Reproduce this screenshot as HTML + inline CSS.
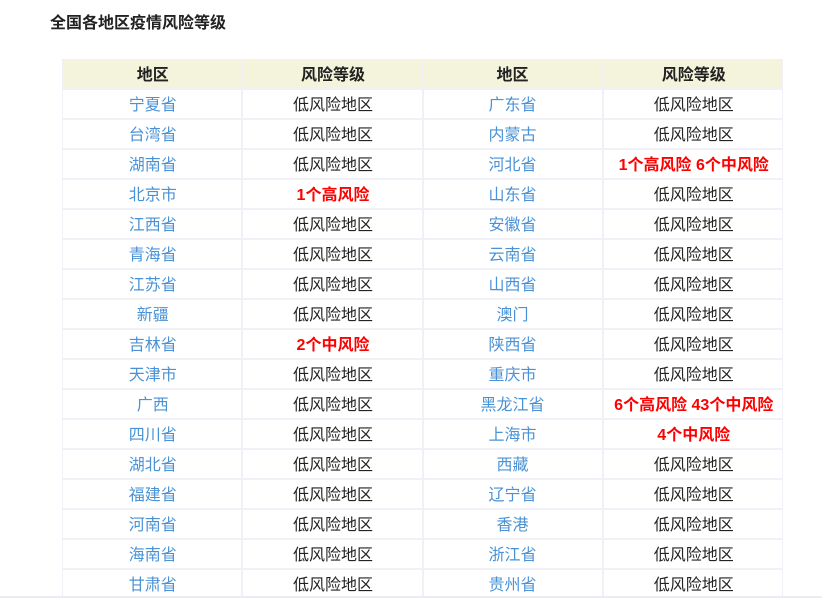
<!DOCTYPE html>
<html lang="zh">
<head>
<meta charset="utf-8">
<style>
html,body{margin:0;padding:0;background:#fff;width:822px;height:598px;overflow:hidden}
body{position:relative;font-family:"Liberation Sans","Noto Sans CJK SC",sans-serif;color:#222}
h1{position:absolute;left:50px;top:13px;margin:0;font-size:16px;line-height:22px;font-weight:bold;color:#222}
table{position:absolute;left:62px;top:59px;width:720px;border-collapse:collapse;table-layout:fixed}
th,td{border:2px solid #f0f0f6;box-sizing:content-box;padding:4px 0 0;text-align:center;font-size:16px;line-height:24px;height:24px}
tr>:first-child{border-left-width:1px;text-indent:2px}
tr>:nth-child(2){text-indent:2px}
tr>:last-child{border-right-width:1px;text-indent:2px}
th{background:#f4f4dc;font-weight:bold;color:#222;border-top-width:1px}
td{color:#222}
td.l{color:#4a92d6}
td.r{color:#f00;font-weight:bold}
.b{position:absolute;left:0;right:0;top:596px;height:2px;background:#e8eef4}
</style>
</head>
<body>
<h1>全国各地区疫情风险等级</h1>
<table>
<colgroup><col style="width:179px"><col style="width:181px"><col style="width:180px"><col style="width:180px"></colgroup>
<tr><th>地区</th><th>风险等级</th><th>地区</th><th>风险等级</th></tr>
<tr><td class="l">宁夏省</td><td>低风险地区</td><td class="l">广东省</td><td>低风险地区</td></tr>
<tr><td class="l">台湾省</td><td>低风险地区</td><td class="l">内蒙古</td><td>低风险地区</td></tr>
<tr><td class="l">湖南省</td><td>低风险地区</td><td class="l">河北省</td><td class="r">1个高风险 6个中风险</td></tr>
<tr><td class="l">北京市</td><td class="r">1个高风险</td><td class="l">山东省</td><td>低风险地区</td></tr>
<tr><td class="l">江西省</td><td>低风险地区</td><td class="l">安徽省</td><td>低风险地区</td></tr>
<tr><td class="l">青海省</td><td>低风险地区</td><td class="l">云南省</td><td>低风险地区</td></tr>
<tr><td class="l">江苏省</td><td>低风险地区</td><td class="l">山西省</td><td>低风险地区</td></tr>
<tr><td class="l">新疆</td><td>低风险地区</td><td class="l">澳门</td><td>低风险地区</td></tr>
<tr><td class="l">吉林省</td><td class="r">2个中风险</td><td class="l">陕西省</td><td>低风险地区</td></tr>
<tr><td class="l">天津市</td><td>低风险地区</td><td class="l">重庆市</td><td>低风险地区</td></tr>
<tr><td class="l">广西</td><td>低风险地区</td><td class="l">黑龙江省</td><td class="r">6个高风险 43个中风险</td></tr>
<tr><td class="l">四川省</td><td>低风险地区</td><td class="l">上海市</td><td class="r">4个中风险</td></tr>
<tr><td class="l">湖北省</td><td>低风险地区</td><td class="l">西藏</td><td>低风险地区</td></tr>
<tr><td class="l">福建省</td><td>低风险地区</td><td class="l">辽宁省</td><td>低风险地区</td></tr>
<tr><td class="l">河南省</td><td>低风险地区</td><td class="l">香港</td><td>低风险地区</td></tr>
<tr><td class="l">海南省</td><td>低风险地区</td><td class="l">浙江省</td><td>低风险地区</td></tr>
<tr><td class="l">甘肃省</td><td>低风险地区</td><td class="l">贵州省</td><td>低风险地区</td></tr>
</table>
<div class="b"></div>
</body>
</html>
